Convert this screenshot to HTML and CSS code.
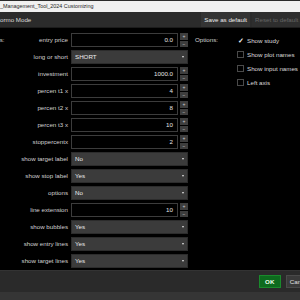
FILE: index.html
```html
<!DOCTYPE html>
<html lang="en">
<head>
    <meta charset="UTF-8">
    <title>Customizing</title>
    <link rel="stylesheet" href="styles.css">
</head>
<body>
    <div class="window">
        <div class="titlebar">_Management_Tool_2024 Customizing</div>

        <div class="toolbar">
            <div class="tab">ormo Mode</div>
            <div class="tool-buttons">
                <span class="tool-btn">Save as default</span>
                <span class="tool-btn disabled">Reset to default</span>
            </div>
        </div>

        <div class="content">
            <div class="form">
                <div class="label first"><span class="section">Inputs:</span><span>entry price</span></div>
                <div class="number"><div class="num-box">0.0</div><div class="spin"><span>+</span><span>&minus;</span></div></div>

                <div class="label">long or short</div>
                <div class="select">SHORT<i class="arrow"></i></div>

                <div class="label">investment</div>
                <div class="number"><div class="num-box">1000.0</div><div class="spin"><span>+</span><span>&minus;</span></div></div>

                <div class="label">percen t1 x</div>
                <div class="number"><div class="num-box">4</div><div class="spin"><span>+</span><span>&minus;</span></div></div>

                <div class="label">percen t2 x</div>
                <div class="number"><div class="num-box">8</div><div class="spin"><span>+</span><span>&minus;</span></div></div>

                <div class="label">percen t3 x</div>
                <div class="number"><div class="num-box">10</div><div class="spin"><span>+</span><span>&minus;</span></div></div>

                <div class="label">stoppercentx</div>
                <div class="number"><div class="num-box">2</div><div class="spin"><span>+</span><span>&minus;</span></div></div>

                <div class="label">show target label</div>
                <div class="select">No<i class="arrow"></i></div>

                <div class="label">show stop label</div>
                <div class="select">Yes<i class="arrow"></i></div>

                <div class="label">options</div>
                <div class="select">No<i class="arrow"></i></div>

                <div class="label">line extension</div>
                <div class="number"><div class="num-box">10</div><div class="spin"><span>+</span><span>&minus;</span></div></div>

                <div class="label">show bubbles</div>
                <div class="select">Yes<i class="arrow"></i></div>

                <div class="label">show entry lines</div>
                <div class="select">Yes<i class="arrow"></i></div>

                <div class="label">show target lines</div>
                <div class="select">Yes<i class="arrow"></i></div>
            </div>

            <div class="options">
                <div class="options-title">Options:</div>
                <ul class="checks">
                    <li><span class="box checked">&#10003;</span>Show study</li>
                    <li><span class="box"></span>Show plot names</li>
                    <li><span class="box"></span>Show input names</li>
                    <li><span class="box"></span>Left axis</li>
                </ul>
            </div>
        </div>

        <div class="footer">
            <span class="btn ok">OK</span>
            <span class="btn">Cancel</span>
        </div>
        <div class="statusbar"></div>
    </div>
</body>
</html>
```

FILE: styles.css
```css
html, body {
    margin: 0;
    width: 300px;
    height: 300px;
    overflow: hidden;
    background: #000;
}
.window {
    font-family: "Liberation Sans", Arial, sans-serif;
    font-size: 6.2px;
    color: #d6d6d6;
    border-top: 1px solid #2a2a2a;
}
.titlebar {
    height: 11px;
    line-height: 11px;
    background: #f0f0f0;
    color: #1e1e1e;
    font-size: 5.4px;
    white-space: nowrap;
}
.toolbar {
    height: 15px;
    display: flex;
    justify-content: space-between;
    background: #2b2b2b;
    border-bottom: 1px solid #1c1c1c;
    white-space: nowrap;
}
.tab {
    line-height: 15px;
    color: #dcdcdc;
}
.tool-buttons {
    display: flex;
    gap: 2px;
}
.tool-btn {
    line-height: 15px;
    padding: 0 3px;
    background: #343434;
    color: #ececec;
}
.tool-btn.disabled {
    background: #2e2e2e;
    color: #666;
    width: 42px;
    overflow: hidden;
}
.content {
    display: flex;
    height: 242px;
    background: #000;
}
.form {
    display: grid;
    grid-template-columns: 68px 117px;
    grid-auto-rows: 14px;
    column-gap: 3px;
    row-gap: 3px;
    padding-top: 5px;
    align-content: start;
}
.label {
    line-height: 14px;
    text-align: right;
    white-space: nowrap;
    color: #d2d2d2;
}
.label.first {
    display: flex;
    justify-content: space-between;
}
.section {
    margin-left: -14px;
}
.number {
    display: flex;
    gap: 2px;
}
.num-box {
    flex: 1;
    border: 1px solid #3c3c3c;
    line-height: 12px;
    text-align: right;
    padding-right: 4px;
    color: #e6e6e6;
}
.spin {
    width: 8px;
    display: flex;
    flex-direction: column;
    gap: 1px;
}
.spin span {
    flex: 1;
    background: #3e3e3e;
    color: #cfcfcf;
    font-size: 5px;
    line-height: 6px;
    text-align: center;
}
.select {
    position: relative;
    background: #3b3b3b;
    border: 1px solid #2c2c2c;
    line-height: 12px;
    padding-left: 3px;
    color: #ededed;
}
.arrow {
    position: absolute;
    right: 3px;
    top: 5px;
    border-left: 1.5px solid transparent;
    border-right: 1.5px solid transparent;
    border-top: 2px solid #e6e6e6;
}
.options {
    display: flex;
    padding: 5px 0 0 7px;
    gap: 19px;
}
.options-title {
    line-height: 14px;
    color: #d2d2d2;
}
.checks {
    list-style: none;
    margin: 0;
    padding: 0;
}
.checks li {
    display: flex;
    align-items: center;
    gap: 3px;
    height: 14px;
    white-space: nowrap;
    color: #dcdcdc;
}
.box {
    width: 5px;
    height: 5px;
    border: 1px solid #4a4a4a;
    font-size: 7px;
    line-height: 5px;
    color: #f0f0f0;
    text-align: center;
}
.box.checked {
    border-color: transparent;
    font-weight: bold;
}
.footer {
    height: 21px;
    display: flex;
    justify-content: flex-end;
    align-items: center;
    gap: 5px;
    margin-right: -13px;
    background: #2a2a2a;
    border-top: 1px solid #333;
}
.btn {
    line-height: 11px;
    padding: 0 3px;
    min-width: 14px;
    text-align: center;
    background: #3a3a3a;
    border: 1px solid #4a4a4a;
    color: #e0e0e0;
}
.btn.ok {
    background: #0d6a1e;
    border-color: #1a8a2c;
    color: #eaffea;
    font-weight: bold;
}
.statusbar {
    height: 9px;
    background: #353535;
}
```
